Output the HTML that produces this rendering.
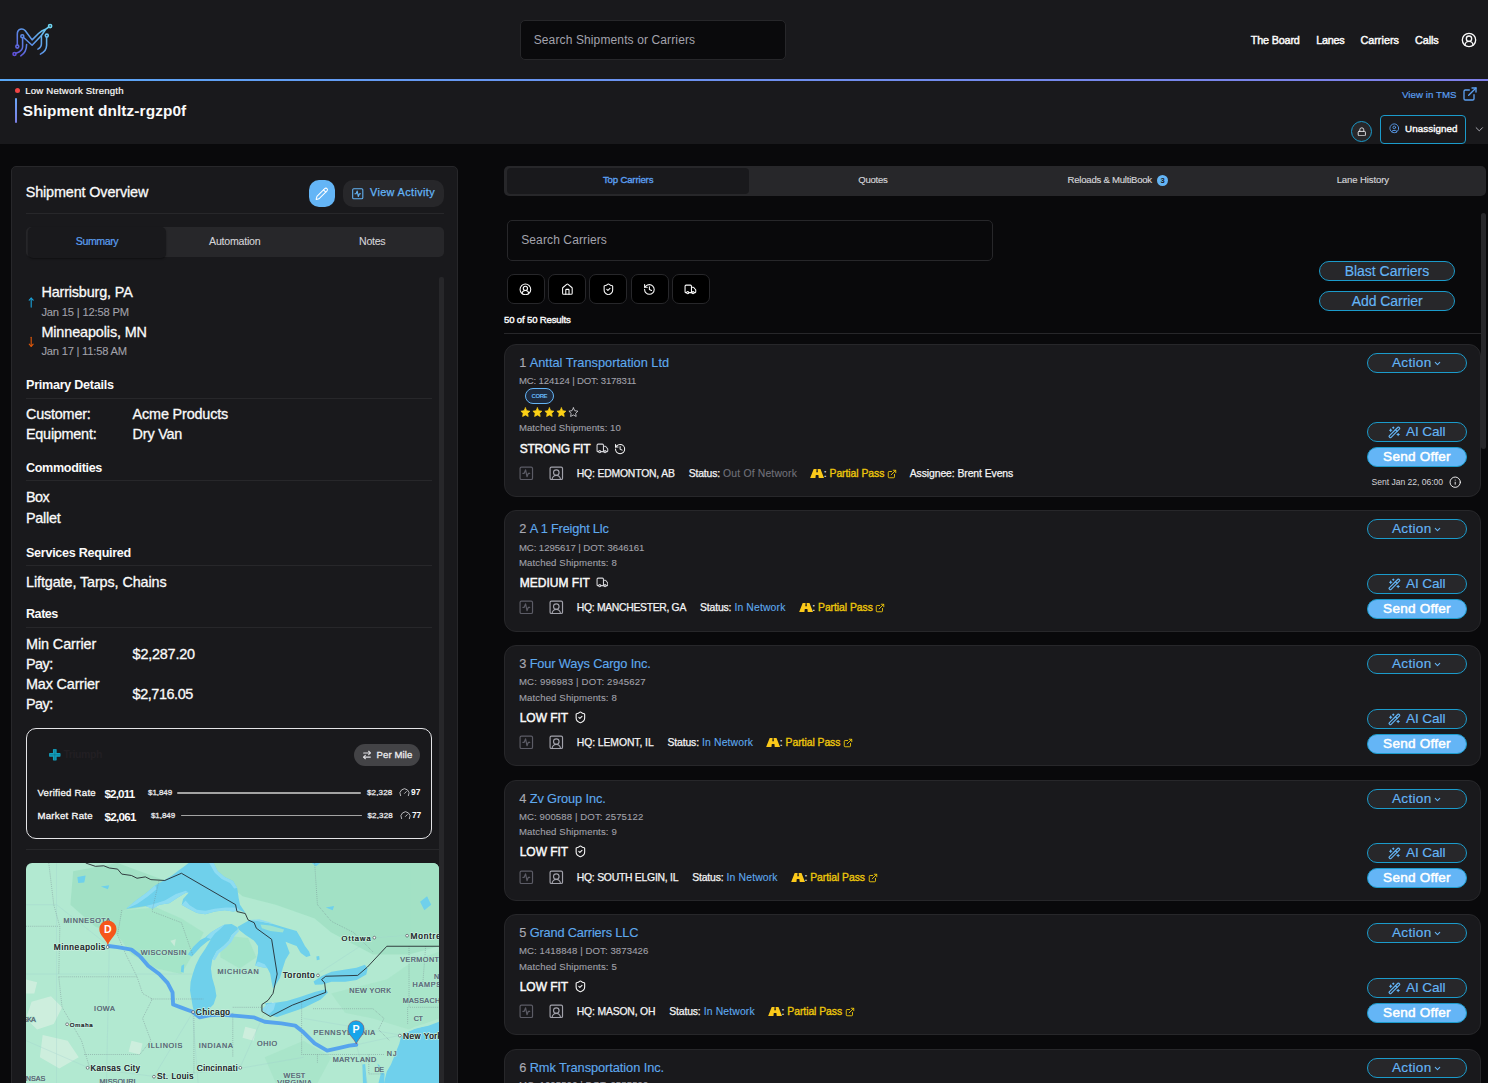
<!DOCTYPE html>
<html lang="en">
<head>
<meta charset="utf-8">
<title>Shipment dnltz-rgzp0f</title>
<style>
*{box-sizing:border-box}
html,body{margin:0;padding:0}
body{position:relative;width:1488px;height:1083px;overflow:hidden;background:#09090b;color:#fafafa;font-family:"Liberation Sans",sans-serif;font-size:12px}
header,nav,aside,main,section,article,div.b,button.b,a.b,ul.b,li.b{position:absolute;display:block;margin:0;padding:0;overflow:visible}
button{font:inherit;color:inherit;background:none;border:0;padding:0;margin:0}
.t{position:absolute;white-space:nowrap;margin:0;font-weight:400;display:block}
.a{position:absolute;display:block}
a{text-decoration:none;color:inherit}
</style>
</head>
<body>
<header style="left:0px;top:0px;width:1488px;height:79px;background:#19191c;"><svg class="a" style="left:0;top:0" width="64" height="79" viewBox="0 0 64 79" fill="none" stroke="url(#lg)" stroke-width="1.55" stroke-linecap="round" stroke-linejoin="round"><defs><linearGradient id="lg" gradientUnits="userSpaceOnUse" x1="14" y1="56" x2="50" y2="26"><stop offset="0" stop-color="#5f4bd6"/><stop offset="0.45" stop-color="#5b8fe8"/><stop offset="1" stop-color="#6fd6f2"/></linearGradient></defs><path d="M17.3 45V34.2c0-5.6 5.2-6.2 7.8-3.700L32.100 39.900 38.500 33.500C41.500 30.800 43.500 30 45.500 29.300L48.800 27"/><path d="M23.300 37.200 32.100 45.200 41.400 35.500 45.200 30"/><path d="M22.600 38v9c0 3.500-3 5-6.700 6.300"/><path d="M26.600 44.400c0 5-2 9-5.800 11.500"/><path d="M41.400 35.700v8c0 2.500-1.200 4.200-3.500 5.400"/><path d="M46.600 37.300v8c0 4-2.500 7-6.200 8.800"/><circle cx="17.300" cy="46.600" r="1.500"/><circle cx="22.300" cy="36.200" r="1.500"/><circle cx="14.500" cy="54" r="1.500"/><circle cx="50.100" cy="26" r="1.600"/><circle cx="46.800" cy="35.600" r="1.500"/></svg><div class="b" style="left:519.5px;top:20px;width:266.5px;height:40px;background:#0a0a0c;border:1px solid #27272a;border-radius:5px;"><span class="t" style="left:13.2px;top:13px;font-size:12px;line-height:12px;color:#a3a3ad;letter-spacing:0.123px;">Search Shipments or Carriers</span></div>
<nav style="left:1240px;top:20px;width:248px;height:40px;"><a class="t" style="left:10.8px;top:15px;font-size:10.8px;line-height:10.8px;color:#fafafa;-webkit-text-stroke:0.45px #fafafa;letter-spacing:-0.169px;">The Board</a><a class="t" style="left:76.2px;top:15px;font-size:10.8px;line-height:10.8px;color:#fafafa;-webkit-text-stroke:0.45px #fafafa;letter-spacing:-0.244px;">Lanes</a><a class="t" style="left:120.4px;top:15px;font-size:10.8px;line-height:10.8px;color:#fafafa;-webkit-text-stroke:0.45px #fafafa;letter-spacing:0.026px;">Carriers</a><a class="t" style="left:175px;top:15px;font-size:10.8px;line-height:10.8px;color:#fafafa;-webkit-text-stroke:0.45px #fafafa;letter-spacing:-0.080px;">Calls</a><svg class="a" style="left:221px;top:12px;" width="16" height="16" viewBox="0 0 24 24" fill="none" stroke="#fafafa" stroke-width="2" stroke-linecap="round" stroke-linejoin="round"><path d="M18 20a6 6 0 0 0-12 0"/><circle cx="12" cy="10" r="4"/><circle cx="12" cy="12" r="10"/></svg></nav>
</header>
<div class="b" style="left:0px;top:79px;width:1488px;height:2px;background:linear-gradient(90deg,#5aa8f6 0%,#6a93f0 40%,#7f7fe8 100%);"></div>
<section style="left:0px;top:81px;width:1488px;height:63px;background:#19191c;"><span class="a" style="left:14.5px;top:7px;width:5px;height:5px;background:#ef4444;border-radius:50%;"></span><span class="t" style="left:25.2px;top:5px;font-size:9.6px;line-height:9.6px;color:#fafafa;-webkit-text-stroke:0.2px #fafafa;letter-spacing:0.205px;">Low Network Strength</span><span class="a" style="left:14.8px;top:17px;width:2.6px;height:24.5px;background:linear-gradient(180deg,#6aa6f5,#7b7fe6);border-radius:1px;"></span><h1 class="t" style="left:22.8px;top:22px;font-size:15.4px;line-height:15.4px;color:#fafafa;font-weight:700;letter-spacing:0.091px;">Shipment dnltz-rgzp0f</h1><a class="t" style="left:1402px;top:9px;font-size:9.7px;line-height:9.7px;color:#5b9ff0;-webkit-text-stroke:0.2px #5b9ff0;letter-spacing:0.052px;">View in TMS</a><svg class="a" style="left:1462px;top:4.6px;" width="16" height="16" viewBox="0 0 24 24" fill="none" stroke="#5b9ff0" stroke-width="2" stroke-linecap="round" stroke-linejoin="round"><path d="M15 3h6v6"/><path d="M10 14 21 3"/><path d="M18 13v6a2 2 0 0 1-2 2H5a2 2 0 0 1-2-2V8a2 2 0 0 1 2-2h6"/></svg><button class="b" style="left:1351px;top:40px;width:21px;height:21px;background:#27272a;border:1px solid #1b9bcb;border-radius:50%;"><svg class="a" style="left:4.8px;top:4.5px;" width="9.6" height="9.6" viewBox="0 0 24 24" fill="none" stroke="#e4e4e7" stroke-width="2.4" stroke-linecap="round" stroke-linejoin="round"><rect width="18" height="11" x="3" y="11" rx="2" ry="2"/><path d="M7 11V7a5 5 0 0 1 10 0v4"/></svg></button>
<button class="b" style="left:1380px;top:34px;width:86px;height:28.6px;border:1.5px solid #1b9bcb;border-radius:4px;background:#19191c;"><svg class="a" style="left:7.5px;top:7.3px;" width="10.6" height="10.6" viewBox="0 0 24 24" fill="none" stroke="#5b9ff0" stroke-width="2" stroke-linecap="round" stroke-linejoin="round"><circle cx="12" cy="12" r="10"/><circle cx="12" cy="10" r="3"/><path d="M7 20.662V19a2 2 0 0 1 2-2h6a2 2 0 0 1 2 2v1.662"/></svg><span class="t" style="left:24px;top:7.5px;font-size:9.8px;line-height:9.8px;color:#fafafa;-webkit-text-stroke:0.4px #fafafa;letter-spacing:0.085px;">Unassigned</span></button>
<svg class="a" style="left:1473.4px;top:42.4px;" width="12.6" height="12.6" viewBox="0 0 24 24" fill="none" stroke="#b4b4bc" stroke-width="1.8" stroke-linecap="round" stroke-linejoin="round"><path d="m6 9 6 6 6-6"/></svg></section>
<aside style="left:11px;top:166px;width:446.6px;height:960px;background:#19191c;border:1px solid #27272a;border-radius:5px;"><h2 class="t" style="left:13.7px;top:18px;font-size:14.4px;line-height:14.4px;color:#fafafa;-webkit-text-stroke:0.3px #fafafa;letter-spacing:-0.134px;">Shipment Overview</h2><button class="b" style="left:297px;top:13px;width:26.4px;height:27px;background:#64b5f6;border-radius:10px;"><svg class="a" style="left:6px;top:7px;" width="13.6" height="13.6" viewBox="0 0 24 24" fill="none" stroke="#ffffff" stroke-width="1.8" stroke-linecap="round" stroke-linejoin="round"><path d="M21.174 6.812a1 1 0 0 0-3.986-3.987L3.842 16.174a2 2 0 0 0-.5.830l-1.321 4.352a.5.5 0 0 0 .623.622l4.353-1.320a2 2 0 0 0 .830-.497z"/><path d="m15 5 4 4"/></svg></button>
<button class="b" style="left:331px;top:13px;width:101px;height:27px;background:#27272a;border-radius:10px;"><svg class="a" style="left:7.8px;top:6.8px;" width="13.5" height="13.5" viewBox="0 0 24 24" fill="none" stroke="#64b5f6" stroke-width="1.9" stroke-linecap="round" stroke-linejoin="round"><rect width="18" height="18" x="3" y="3" rx="2"/><path d="M17 12h-2l-2 5-2-10-2 5H7"/></svg><span class="t" style="left:27px;top:7px;font-size:10.8px;line-height:10.8px;color:#64b5f6;-webkit-text-stroke:0.25px #64b5f6;letter-spacing:0.399px;">View Activity</span></button>
<span class="a" style="left:14px;top:46px;width:418px;height:1px;background:#27272a;"></span><nav style="left:14px;top:60px;width:418px;height:30px;background:#27272a;border-radius:5px;"><span class="a" style="left:1.5px;top:0px;width:138px;height:30.5px;background:#19191c;border-radius:5px;box-shadow:0 1px 2px rgba(0,0,0,.4);"></span><a class="t" style="left:49.75px;top:9px;font-size:10.6px;line-height:10.6px;color:#5b9ff0;-webkit-text-stroke:0.2px #5b9ff0;letter-spacing:-0.404px;">Summary</a><a class="t" style="left:183.05px;top:9px;font-size:10.6px;line-height:10.6px;color:#d4d4d8;-webkit-text-stroke:0.1px #d4d4d8;letter-spacing:-0.229px;">Automation</a><a class="t" style="left:333px;top:9px;font-size:10.6px;line-height:10.6px;color:#d4d4d8;-webkit-text-stroke:0.1px #d4d4d8;letter-spacing:-0.258px;">Notes</a></nav>
<span class="a" style="left:427.3px;top:110px;width:4.7px;height:810px;background:#27272a;border-radius:2px 2px 0 0;"></span><section style="left:14px;top:110px;width:413px;height:810px;"><svg class="a" style="left:-1.2px;top:19px;" width="12.4" height="12.4" viewBox="0 0 24 24" fill="none" stroke="#1a9fd6" stroke-width="2.2" stroke-linecap="round" stroke-linejoin="round"><path d="m8.200 8.200 3.800-4.200 3.800 4.200"/><path d="M12 21.500V4"/></svg><span class="t" style="left:15.4px;top:8px;font-size:14.4px;line-height:14.4px;color:#fafafa;-webkit-text-stroke:0.3px #fafafa;letter-spacing:-0.151px;">Harrisburg, PA</span><span class="t" style="left:15.4px;top:30px;font-size:11.2px;line-height:11.2px;color:#a1a1aa;-webkit-text-stroke:0.1px #a1a1aa;letter-spacing:-0.177px;">Jan 15 | 12:58 PM</span><svg class="a" style="left:-1.2px;top:59px;" width="12.4" height="12.4" viewBox="0 0 24 24" fill="none" stroke="#d9560b" stroke-width="2.2" stroke-linecap="round" stroke-linejoin="round"><path d="m8.200 15.800 3.800 4.200 3.800-4.200"/><path d="M12 2.500V20"/></svg><span class="t" style="left:15.4px;top:48px;font-size:14.4px;line-height:14.4px;color:#fafafa;-webkit-text-stroke:0.3px #fafafa;letter-spacing:-0.111px;">Minneapolis, MN</span><span class="t" style="left:15.4px;top:69px;font-size:11.2px;line-height:11.2px;color:#a1a1aa;-webkit-text-stroke:0.1px #a1a1aa;letter-spacing:-0.221px;">Jan 17 | 11:58 AM</span><h3 class="t" style="left:0px;top:102px;font-size:12.6px;line-height:12.6px;color:#fafafa;font-weight:700;letter-spacing:-0.268px;">Primary Details</h3><span class="a" style="left:0px;top:121px;width:406px;height:1px;background:#27272a;"></span><span class="t" style="left:0px;top:130px;font-size:14.4px;line-height:14.4px;color:#fafafa;-webkit-text-stroke:0.3px #fafafa;letter-spacing:-0.197px;">Customer:</span><span class="t" style="left:106.6px;top:130px;font-size:14.4px;line-height:14.4px;color:#fafafa;-webkit-text-stroke:0.3px #fafafa;letter-spacing:-0.160px;">Acme Products</span><span class="t" style="left:0px;top:150px;font-size:14.4px;line-height:14.4px;color:#fafafa;-webkit-text-stroke:0.3px #fafafa;letter-spacing:-0.240px;">Equipment:</span><span class="t" style="left:106.6px;top:150px;font-size:14.4px;line-height:14.4px;color:#fafafa;-webkit-text-stroke:0.3px #fafafa;letter-spacing:-0.189px;">Dry Van</span><h3 class="t" style="left:0px;top:185px;font-size:12.6px;line-height:12.6px;color:#fafafa;font-weight:700;letter-spacing:-0.344px;">Commodities</h3><span class="a" style="left:0px;top:203.3px;width:406px;height:1px;background:#27272a;"></span><span class="t" style="left:0px;top:213px;font-size:14.4px;line-height:14.4px;color:#fafafa;-webkit-text-stroke:0.3px #fafafa;letter-spacing:-0.604px;">Box</span><span class="t" style="left:0px;top:234px;font-size:14.4px;line-height:14.4px;color:#fafafa;-webkit-text-stroke:0.3px #fafafa;letter-spacing:-0.267px;">Pallet</span><h3 class="t" style="left:0px;top:270px;font-size:12.6px;line-height:12.6px;color:#fafafa;font-weight:700;letter-spacing:-0.289px;">Services Required</h3><span class="a" style="left:0px;top:288.3px;width:406px;height:1px;background:#27272a;"></span><span class="t" style="left:0px;top:298px;font-size:14.4px;line-height:14.4px;color:#fafafa;-webkit-text-stroke:0.3px #fafafa;letter-spacing:-0.101px;">Liftgate, Tarps, Chains</span><h3 class="t" style="left:0px;top:331px;font-size:12.6px;line-height:12.6px;color:#fafafa;font-weight:700;letter-spacing:-0.483px;">Rates</h3><span class="a" style="left:0px;top:350px;width:406px;height:1px;background:#27272a;"></span><span class="t" style="left:0px;top:360px;font-size:14.4px;line-height:14.4px;color:#fafafa;-webkit-text-stroke:0.3px #fafafa;letter-spacing:-0.088px;">Min Carrier</span><span class="t" style="left:0px;top:380px;font-size:14.4px;line-height:14.4px;color:#fafafa;-webkit-text-stroke:0.3px #fafafa;letter-spacing:-0.524px;">Pay:</span><span class="t" style="left:106.6px;top:370px;font-size:14.4px;line-height:14.4px;color:#fafafa;-webkit-text-stroke:0.3px #fafafa;letter-spacing:-0.203px;">$2,287.20</span><span class="t" style="left:0px;top:400px;font-size:14.4px;line-height:14.4px;color:#fafafa;-webkit-text-stroke:0.3px #fafafa;letter-spacing:-0.152px;">Max Carrier</span><span class="t" style="left:0px;top:420px;font-size:14.4px;line-height:14.4px;color:#fafafa;-webkit-text-stroke:0.3px #fafafa;letter-spacing:-0.524px;">Pay:</span><span class="t" style="left:106.6px;top:410px;font-size:14.4px;line-height:14.4px;color:#fafafa;-webkit-text-stroke:0.3px #fafafa;letter-spacing:-0.426px;">$2,716.05</span><div class="b" style="left:0px;top:451px;width:406.2px;height:111px;border:1px solid #e4e4e7;border-radius:10px;"><svg class="a" style="left:22.1px;top:20.1px" width="11.6" height="11.6" viewBox="0 0 10 10"><path fill="#14a0be" d="M3.400 .300Q5 -.300 6.600 .300V3.400H9.700Q10.300 5 9.700 6.600H6.600V9.700Q5 10.300 3.400 9.700V6.600H.300Q-.300 5 .300 3.400H3.400z"/><path d="M5 .500V9.500M.500 5H9.500" stroke="#0d6d83" stroke-width=".5" fill="none"/></svg><span class="t" style="left:36.4px;top:20px;font-size:10.5px;line-height:10.5px;color:#221f23;font-weight:700;letter-spacing:-0.417px;">Triumph</span><button class="b" style="left:327px;top:15px;width:66px;height:22px;background:#434346;border-radius:11px;"><svg class="a" style="left:8.4px;top:6.2px;" width="10" height="10" viewBox="0 0 24 24" fill="none" stroke="#e4e4e7" stroke-width="2.6" stroke-linecap="round" stroke-linejoin="round"><path d="m16 3 4 4-4 4"/><path d="M20 7H4"/><path d="m8 21-4-4 4-4"/><path d="M4 17h16"/></svg><span class="t" style="left:22.5px;top:6px;font-size:9.6px;line-height:9.6px;color:#ececef;-webkit-text-stroke:0.3px #ececef;letter-spacing:0.077px;">Per Mile</span></button>
<span class="t" style="left:10.4px;top:59px;font-size:9.6px;line-height:9.6px;color:#fafafa;-webkit-text-stroke:0.3px #fafafa;letter-spacing:0.282px;">Verified Rate</span><span class="t" style="left:77.4px;top:59px;font-size:11.6px;line-height:11.6px;color:#fafafa;font-weight:700;letter-spacing:-0.821px;">$2,011</span><span class="t" style="left:121.1px;top:60px;font-size:8px;line-height:8px;color:#e4e4e7;-webkit-text-stroke:0.3px #e4e4e7;letter-spacing:-0.078px;">$1,849</span><span class="a" style="left:150.2px;top:62.7px;width:183.5px;height:2px;background:#a3a3a3;border-radius:1px;"></span><span class="t" style="left:339.9px;top:60px;font-size:8px;line-height:8px;color:#e4e4e7;-webkit-text-stroke:0.3px #e4e4e7;letter-spacing:0.189px;">$2,328</span><svg class="a" style="left:371.6px;top:58px;" width="11" height="11" viewBox="0 0 24 24" fill="none" stroke="#e4e4e7" stroke-width="1.7" stroke-linecap="round" stroke-linejoin="round"><path d="m12 14 4-4"/><path d="M3.340 19a10 10 0 1 1 17.320 0"/></svg><span class="t" style="left:384px;top:59px;font-size:8.4px;line-height:8.4px;color:#fafafa;font-weight:700;letter-spacing:0.186px;">97</span><span class="t" style="left:10.4px;top:82px;font-size:9.6px;line-height:9.6px;color:#fafafa;-webkit-text-stroke:0.3px #fafafa;letter-spacing:0.294px;">Market Rate</span><span class="t" style="left:77.4px;top:82px;font-size:11.6px;line-height:11.6px;color:#fafafa;font-weight:700;letter-spacing:-0.678px;">$2,061</span><span class="t" style="left:124px;top:83px;font-size:8px;line-height:8px;color:#e4e4e7;-webkit-text-stroke:0.3px #e4e4e7;letter-spacing:-0.078px;">$1,849</span><span class="a" style="left:153.5px;top:85.9px;width:181.4px;height:1px;background:#a3a3a3;border-radius:1px;"></span><span class="t" style="left:340.4px;top:83px;font-size:8px;line-height:8px;color:#e4e4e7;-webkit-text-stroke:0.3px #e4e4e7;letter-spacing:0.189px;">$2,328</span><svg class="a" style="left:372.6px;top:81px;" width="11" height="11" viewBox="0 0 24 24" fill="none" stroke="#e4e4e7" stroke-width="1.7" stroke-linecap="round" stroke-linejoin="round"><path d="m12 14 4-4"/><path d="M3.340 19a10 10 0 1 1 17.320 0"/></svg><span class="t" style="left:385px;top:82px;font-size:8.4px;line-height:8.4px;color:#fafafa;font-weight:700;letter-spacing:-0.164px;">77</span></div>
<span class="a" style="left:0px;top:572px;width:413px;height:1px;background:#27272a;"></span><div class="b" style="left:0px;top:586px;width:413px;height:240px;background:#b2e9d1;border-radius:6px 6px 0 0;overflow:hidden;"><svg class="a" style="left:0;top:0" width="413" height="220.1" viewBox="0 0 1488 793" font-family="Liberation Sans, sans-serif"><path fill="#a3e2c5" d="M150 0H1488V300L1380 330 1250 330 1100 250 1040 200 900 150 780 120 640 0z"/><path fill="#a3e2c5" d="M170 30 330 0 520 70 470 150 350 170 330 260 250 230 160 150z"/><path fill="#a3e2c5" d="M350 170 470 160 560 200 640 250 600 330 560 400 470 380 380 330 330 260z" opacity=".7"/><path fill="#a3e2c5" d="M1100 470 1300 420 1400 350 1488 320V560L1380 600 1250 560 1150 540z" opacity=".6"/><path fill="#a3e2c5" d="M700 260 800 270 830 340 770 380 700 340z" opacity=".7"/><path fill="#a3e2c5" d="M860 700 1000 640 1100 700 1050 793H900z" opacity=".6"/><g fill="#e9f4ea" opacity=".5"><path d="M0 420 40 430 30 470 0 470z"/><path d="M20 500 90 480 130 520 100 580 40 600 0 560z"/><path d="M60 620 150 640 190 700 120 740 50 700z"/><path d="M380 640 420 650 410 690 370 680z"/><path d="M520 280 540 275 535 300z"/><path d="M790 590 830 600 820 640 780 630z"/><path d="M870 505 890 500 895 520 872 525z"/></g><path fill="#6fd0ec" d="M361 165 396 135 431 110 466 80 501 60 526 45 546 30 566 15 586 0H676L691 30 716 50 746 65 761 90 766 125 771 150 791 180 771 170 746 175 716 170 681 175 646 185 616 180 586 165 561 150 566 130 586 107 576 107 546 125 516 145 481 150 456 165 431 155 396 160z"/><path fill="#8fdcf2" d="M361 165 396 135 431 110 466 80 470 95 440 120 400 148z"/><path fill="#8fdcf2" d="M546 125 516 145 481 150 456 165 431 155 460 148 500 135 540 112 576 100 586 107 576 107z"/><path fill="#8fdcf2" d="M561 150 586 165 616 180 646 185 681 175 716 170 746 175 771 170 760 160 720 160 680 165 646 172 616 168 590 152 575 135z"/><path fill="#8fdcf2" d="M676 0 691 30 716 50 746 65 761 90 750 92 735 72 705 58 680 35 660 0z"/><path fill="#6fd0ec" d="M763 232 741 220 716 222 691 235 666 250 646 268 628 277 603 302 583 330 598 337 629 303 653 283 666 276 646 309 626 339 611 369 601 399 593 429 591 459 596 489 601 519 606 536 628 546 651 534 676 509 686 479 681 449 671 414 666 379 671 349 686 319 711 299 731 279 741 259 763 240z"/><path fill="#8fdcf2" d="M666 274 680 255 700 238 716 222 691 235 666 250 650 268z"/><path fill="#8fdcf2" d="M763 240 741 259 731 279 711 299 686 319 671 349 680 350 695 325 720 305 740 285 752 262 768 245z"/><path fill="#6fd0ec" d="M763 230 806 205 841 210 890 220 940 235 975 245 990 270 1005 299 1020 319 1025 334 1010 339 990 324 975 299 960 294 935 284 950 324 935 349 925 379 915 414 900 439 890 452 885 429 880 399 870 379 841 374 826 369 831 349 836 324 836 299 821 279 791 259 766 240z"/><path fill="#9fe3d0" d="M845 222 880 225 930 240 925 250 880 245 850 235z"/><path fill="#8fdcf2" d="M826 369 841 374 870 379 860 365 835 355z"/><path fill="#8fdcf2" d="M806 205 841 210 890 220 880 214 840 203z"/><path fill="#6fd0ec" d="M862 505 888 503 890 522 868 524z"/><path fill="#6fd0ec" d="M850 528 870 508 940 497 990 482 1040 465 1080 455 1088 467 1062 492 1000 522 950 540 905 555 872 548z"/><path fill="#8fdcf2" d="M850 528 870 508 900 503 892 530 872 548z"/><path fill="#6fd0ec" d="M1036 427 1066 407 1101 392 1151 384 1191 377 1221 367 1231 380 1226 402 1191 422 1151 428 1101 428 1066 438 1041 439z"/><path fill="#6fd0ec" d="M1046 337 1056 335 1058 348 1048 350z"/><g fill="#6fd0ec"><path d="M185 50 215 45 210 70 188 72z"/><path d="M270 85 300 80 295 95z"/><path d="M1080 160 1110 155 1105 170z"/><path d="M1420 140 1445 120 1460 150 1435 170z"/><path d="M1030 0 1060 0 1045 12z"/><path d="M560 370 570 365 568 395 558 392z"/><path d="M1212 726 1222 724 1228 793H1214z"/><path d="M1266 722 1280 735 1292 760 1290 793H1270L1278 760z"/></g><path fill="#6fd0ec" d="M1491 571 1450 586 1400 596 1365 611 1350 631 1345 651 1335 676 1325 701 1315 726 1300 751 1295 771 1290 793H1491z"/><path fill="#b2e9d1" d="M1365 608 1400 590 1450 576 1491 560V566L1450 584 1400 598 1370 612z"/><g fill="none" stroke="#9fcfcf" stroke-width="2" opacity=".55"><path d="M0 150H110L300 300"/><path d="M0 400H600"/><path d="M110 0V793"/><path d="M300 300 290 793"/><path d="M0 640 230 740 470 770 770 740 1000 700"/><path d="M600 540 620 793"/><path d="M770 740 850 560 880 500"/><path d="M600 540 460 770"/><path d="M1050 400 1250 270 1380 260"/><path d="M1190 655 1350 620"/><path d="M1190 655 1230 793"/><path d="M1000 560 1350 620"/></g><g fill="none" stroke="#6f7f89" stroke-width="1.9" stroke-dasharray="3 4" opacity=".9"><path d="M0 228H120"/><path d="M82 0 100 150 122 230 118 400"/><path d="M118 410H400"/><path d="M345 170 330 260 360 330 400 410 420 470 455 490"/><path d="M450 490H640"/><path d="M455 170 480 60"/><path d="M455 175 560 215 600 330"/><path d="M118 410 130 520 200 640 230 740"/><path d="M210 690H410L450 640 420 560 455 490"/><path d="M605 545V760"/><path d="M745 540V700"/><path d="M745 520H850"/><path d="M993 500V690H1290"/><path d="M1035 525H1250L1290 560 1270 600 1310 640"/><path d="M1050 690V720"/><path d="M1235 690V760H1290"/><path d="M1380 300V520H1488"/><path d="M1375 520V580"/><path d="M1440 300 1430 430"/><path d="M1040 0 1050 150 1100 210 1180 250 1250 320"/></g><path fill="none" stroke="#23292e" stroke-width="3.2" stroke-linejoin="round" d="M215 0 250 12 280 10 300 18 330 22 345 40 380 45 400 55 430 50 450 60 500 63 560 37 755 150 760 175 790 182 800 205 822 215 830 235 885 275 905 400 890 470 872 495 850 510 850 535 880 553 960 512 1080 466 1076 432 1065 420 1080 408 1195 405 1230 375 1300 300H1488"/><path fill="none" stroke="#56a4ed" stroke-width="14" stroke-linecap="round" stroke-linejoin="round" d="M297 299 330 303 380 312 410 335 440 370 480 400 510 432 528 466 530 510 560 521 600 536 625 556 660 549 700 546 760 551 820 556 860 572 920 578 970 586 1000 610 1040 650 1085 676 1130 666 1165 658 1190 655"/><g stroke-linejoin="round"><text x="135" y="216" font-size="26" fill="#5f6d7b" stroke="#b2e9d1" stroke-width="5" style="paint-order:stroke" textLength="170" lengthAdjust="spacing">MINNESOTA</text><text x="135" y="216" font-size="26" fill="#5f6d7b" stroke="#5f6d7b" stroke-width=".3" textLength="170" lengthAdjust="spacing">MINNESOTA</text><text x="413" y="333" font-size="26" fill="#5f6d7b" stroke="#b2e9d1" stroke-width="5" style="paint-order:stroke" textLength="165" lengthAdjust="spacing">WISCONSIN</text><text x="413" y="333" font-size="26" fill="#5f6d7b" stroke="#5f6d7b" stroke-width=".3" textLength="165" lengthAdjust="spacing">WISCONSIN</text><text x="690" y="401" font-size="26" fill="#5f6d7b" stroke="#b2e9d1" stroke-width="5" style="paint-order:stroke" textLength="148" lengthAdjust="spacing">MICHIGAN</text><text x="690" y="401" font-size="26" fill="#5f6d7b" stroke="#5f6d7b" stroke-width=".3" textLength="148" lengthAdjust="spacing">MICHIGAN</text><text x="245" y="535" font-size="26" fill="#5f6d7b" stroke="#b2e9d1" stroke-width="5" style="paint-order:stroke" textLength="75" lengthAdjust="spacing">IOWA</text><text x="245" y="535" font-size="26" fill="#5f6d7b" stroke="#5f6d7b" stroke-width=".3" textLength="75" lengthAdjust="spacing">IOWA</text><text x="440" y="667" font-size="26" fill="#5f6d7b" stroke="#b2e9d1" stroke-width="5" style="paint-order:stroke" textLength="123" lengthAdjust="spacing">ILLINOIS</text><text x="440" y="667" font-size="26" fill="#5f6d7b" stroke="#5f6d7b" stroke-width=".3" textLength="123" lengthAdjust="spacing">ILLINOIS</text><text x="622" y="667" font-size="26" fill="#5f6d7b" stroke="#b2e9d1" stroke-width="5" style="paint-order:stroke" textLength="123" lengthAdjust="spacing">INDIANA</text><text x="622" y="667" font-size="26" fill="#5f6d7b" stroke="#5f6d7b" stroke-width=".3" textLength="123" lengthAdjust="spacing">INDIANA</text><text x="832" y="660" font-size="26" fill="#5f6d7b" stroke="#b2e9d1" stroke-width="5" style="paint-order:stroke" textLength="73" lengthAdjust="spacing">OHIO</text><text x="832" y="660" font-size="26" fill="#5f6d7b" stroke="#5f6d7b" stroke-width=".3" textLength="73" lengthAdjust="spacing">OHIO</text><text x="1348" y="357" font-size="26" fill="#5f6d7b" stroke="#b2e9d1" stroke-width="5" style="paint-order:stroke" textLength="140" lengthAdjust="spacing">VERMONT</text><text x="1348" y="357" font-size="26" fill="#5f6d7b" stroke="#5f6d7b" stroke-width=".3" textLength="140" lengthAdjust="spacing">VERMONT</text><text x="1470" y="419" font-size="26" fill="#5f6d7b" stroke="#b2e9d1" stroke-width="5" style="paint-order:stroke" textLength="60" lengthAdjust="spacing">NEW</text><text x="1470" y="419" font-size="26" fill="#5f6d7b" stroke="#5f6d7b" stroke-width=".3" textLength="60" lengthAdjust="spacing">NEW</text><text x="1393" y="446" font-size="26" fill="#5f6d7b" stroke="#b2e9d1" stroke-width="5" style="paint-order:stroke" textLength="175" lengthAdjust="spacing">HAMPSHIRE</text><text x="1393" y="446" font-size="26" fill="#5f6d7b" stroke="#5f6d7b" stroke-width=".3" textLength="175" lengthAdjust="spacing">HAMPSHIRE</text><text x="1165" y="470" font-size="26" fill="#5f6d7b" stroke="#b2e9d1" stroke-width="5" style="paint-order:stroke" textLength="150" lengthAdjust="spacing">NEW YORK</text><text x="1165" y="470" font-size="26" fill="#5f6d7b" stroke="#5f6d7b" stroke-width=".3" textLength="150" lengthAdjust="spacing">NEW YORK</text><text x="1357" y="504" font-size="26" fill="#5f6d7b" stroke="#b2e9d1" stroke-width="5" style="paint-order:stroke" textLength="245" lengthAdjust="spacing">MASSACHUSETTS</text><text x="1357" y="504" font-size="26" fill="#5f6d7b" stroke="#5f6d7b" stroke-width=".3" textLength="245" lengthAdjust="spacing">MASSACHUSETTS</text><text x="1397" y="568" font-size="26" fill="#5f6d7b" stroke="#b2e9d1" stroke-width="5" style="paint-order:stroke" textLength="33" lengthAdjust="spacing">CT</text><text x="1397" y="568" font-size="26" fill="#5f6d7b" stroke="#5f6d7b" stroke-width=".3" textLength="33" lengthAdjust="spacing">CT</text><text x="1036" y="621" font-size="26" fill="#5f6d7b" stroke="#b2e9d1" stroke-width="5" style="paint-order:stroke" textLength="222" lengthAdjust="spacing">PENNSYLVANIA</text><text x="1036" y="621" font-size="26" fill="#5f6d7b" stroke="#5f6d7b" stroke-width=".3" textLength="222" lengthAdjust="spacing">PENNSYLVANIA</text><text x="1300" y="697" font-size="26" fill="#5f6d7b" stroke="#b2e9d1" stroke-width="5" style="paint-order:stroke" textLength="35" lengthAdjust="spacing">NJ</text><text x="1300" y="697" font-size="26" fill="#5f6d7b" stroke="#5f6d7b" stroke-width=".3" textLength="35" lengthAdjust="spacing">NJ</text><text x="1105" y="716" font-size="26" fill="#5f6d7b" stroke="#b2e9d1" stroke-width="5" style="paint-order:stroke" textLength="157" lengthAdjust="spacing">MARYLAND</text><text x="1105" y="716" font-size="26" fill="#5f6d7b" stroke="#5f6d7b" stroke-width=".3" textLength="157" lengthAdjust="spacing">MARYLAND</text><text x="1256" y="752" font-size="26" fill="#5f6d7b" stroke="#b2e9d1" stroke-width="5" style="paint-order:stroke" textLength="34" lengthAdjust="spacing">DE</text><text x="1256" y="752" font-size="26" fill="#5f6d7b" stroke="#5f6d7b" stroke-width=".3" textLength="34" lengthAdjust="spacing">DE</text><text x="928" y="774" font-size="26" fill="#5f6d7b" stroke="#b2e9d1" stroke-width="5" style="paint-order:stroke" textLength="78" lengthAdjust="spacing">WEST</text><text x="928" y="774" font-size="26" fill="#5f6d7b" stroke="#5f6d7b" stroke-width=".3" textLength="78" lengthAdjust="spacing">WEST</text><text x="905" y="800" font-size="26" fill="#5f6d7b" stroke="#b2e9d1" stroke-width="5" style="paint-order:stroke" textLength="125" lengthAdjust="spacing">VIRGINIA</text><text x="905" y="800" font-size="26" fill="#5f6d7b" stroke="#5f6d7b" stroke-width=".3" textLength="125" lengthAdjust="spacing">VIRGINIA</text><text x="-25" y="573" font-size="26" fill="#5f6d7b" stroke="#b2e9d1" stroke-width="5" style="paint-order:stroke" textLength="60" lengthAdjust="spacing">ASKA</text><text x="-25" y="573" font-size="26" fill="#5f6d7b" stroke="#5f6d7b" stroke-width=".3" textLength="60" lengthAdjust="spacing">ASKA</text><text x="-36" y="786" font-size="26" fill="#5f6d7b" stroke="#b2e9d1" stroke-width="5" style="paint-order:stroke" textLength="106" lengthAdjust="spacing">KANSAS</text><text x="-36" y="786" font-size="26" fill="#5f6d7b" stroke="#5f6d7b" stroke-width=".3" textLength="106" lengthAdjust="spacing">KANSAS</text><text x="265" y="797" font-size="26" fill="#5f6d7b" stroke="#b2e9d1" stroke-width="5" style="paint-order:stroke" textLength="130" lengthAdjust="spacing">MISSOURI</text><text x="265" y="797" font-size="26" fill="#5f6d7b" stroke="#5f6d7b" stroke-width=".3" textLength="130" lengthAdjust="spacing">MISSOURI</text><circle cx="294" cy="303" r="5" fill="#fff" stroke="#3a4046" stroke-width="2.2"/><text x="100" y="313" font-size="30" fill="#2b2f33" stroke="#c9f0df" stroke-width="6" style="paint-order:stroke" textLength="185" lengthAdjust="spacing">Minneapolis</text><text x="100" y="313" font-size="30" fill="#2b2f33" stroke="#2b2f33" stroke-width=".35" textLength="185" lengthAdjust="spacing">Minneapolis</text><circle cx="602" cy="537" r="5" fill="#fff" stroke="#3a4046" stroke-width="2.2"/><text x="612" y="547" font-size="30" fill="#2b2f33" stroke="#c9f0df" stroke-width="6" style="paint-order:stroke" textLength="123" lengthAdjust="spacing">Chicago</text><text x="612" y="547" font-size="30" fill="#2b2f33" stroke="#2b2f33" stroke-width=".35" textLength="123" lengthAdjust="spacing">Chicago</text><circle cx="222" cy="738" r="5" fill="#fff" stroke="#3a4046" stroke-width="2.2"/><text x="232" y="748" font-size="30" fill="#2b2f33" stroke="#c9f0df" stroke-width="6" style="paint-order:stroke" textLength="178" lengthAdjust="spacing">Kansas City</text><text x="232" y="748" font-size="30" fill="#2b2f33" stroke="#2b2f33" stroke-width=".35" textLength="178" lengthAdjust="spacing">Kansas City</text><circle cx="461" cy="770" r="5" fill="#fff" stroke="#3a4046" stroke-width="2.2"/><text x="472" y="780" font-size="30" fill="#2b2f33" stroke="#c9f0df" stroke-width="6" style="paint-order:stroke" textLength="131" lengthAdjust="spacing">St. Louis</text><text x="472" y="780" font-size="30" fill="#2b2f33" stroke="#2b2f33" stroke-width=".35" textLength="131" lengthAdjust="spacing">St. Louis</text><circle cx="772" cy="738" r="5" fill="#fff" stroke="#3a4046" stroke-width="2.2"/><text x="615" y="748" font-size="30" fill="#2b2f33" stroke="#c9f0df" stroke-width="6" style="paint-order:stroke" textLength="147" lengthAdjust="spacing">Cincinnati</text><text x="615" y="748" font-size="30" fill="#2b2f33" stroke="#2b2f33" stroke-width=".35" textLength="147" lengthAdjust="spacing">Cincinnati</text><circle cx="1052" cy="405" r="5" fill="#fff" stroke="#3a4046" stroke-width="2.2"/><text x="925" y="415" font-size="30" fill="#2b2f33" stroke="#c9f0df" stroke-width="6" style="paint-order:stroke" textLength="115" lengthAdjust="spacing">Toronto</text><text x="925" y="415" font-size="30" fill="#2b2f33" stroke="#2b2f33" stroke-width=".35" textLength="115" lengthAdjust="spacing">Toronto</text><circle cx="1255" cy="269" r="5" fill="#fff" stroke="#3a4046" stroke-width="2.2"/><text x="1137" y="280" font-size="27" fill="#2b2f33" stroke="#c9f0df" stroke-width="6" style="paint-order:stroke" textLength="105" lengthAdjust="spacing">Ottawa</text><text x="1137" y="280" font-size="27" fill="#2b2f33" stroke="#2b2f33" stroke-width=".35" textLength="105" lengthAdjust="spacing">Ottawa</text><circle cx="1373" cy="262" r="5" fill="#fff" stroke="#3a4046" stroke-width="2.2"/><text x="1385" y="273" font-size="30" fill="#2b2f33" stroke="#c9f0df" stroke-width="6" style="paint-order:stroke" textLength="140" lengthAdjust="spacing">Montreal</text><text x="1385" y="273" font-size="30" fill="#2b2f33" stroke="#2b2f33" stroke-width=".35" textLength="140" lengthAdjust="spacing">Montreal</text><circle cx="1347" cy="622" r="5" fill="#fff" stroke="#3a4046" stroke-width="2.2"/><text x="1358" y="633" font-size="30" fill="#2b2f33" stroke="#c9f0df" stroke-width="6" style="paint-order:stroke" textLength="140" lengthAdjust="spacing">New York</text><text x="1358" y="633" font-size="30" fill="#2b2f33" stroke="#2b2f33" stroke-width=".35" textLength="140" lengthAdjust="spacing">New York</text><circle cx="148" cy="581" r="5" fill="#fff" stroke="#3a4046" stroke-width="2.2"/><text x="158" y="590" font-size="22" fill="#2b2f33" stroke="#c9f0df" stroke-width="6" style="paint-order:stroke" textLength="82" lengthAdjust="spacing">Omaha</text><text x="158" y="590" font-size="22" fill="#2b2f33" stroke="#2b2f33" stroke-width=".35" textLength="82" lengthAdjust="spacing">Omaha</text></g><path d="M295 296C285 270 264 262 264 238a31 31 0 0 1 62 0C326 262 305 270 295 296z" fill="#f5561b"/><text x="295" y="252" font-size="38" font-weight="700" fill="#fff" text-anchor="middle">D</text><path d="M1190 652C1180 628 1160 620 1160 597a29 29 0 0 1 58 0C1218 620 1200 628 1190 652z" fill="#16a5ea" stroke="#b03a3a" stroke-width="1.8"/><text x="1189" y="611" font-size="38" font-weight="700" fill="#fff" text-anchor="middle">P</text></svg></div>
</section>
</aside>
<main style="left:504px;top:166px;width:984px;height:917px;"><nav style="left:0px;top:0px;width:982px;height:30px;background:#27272a;border-radius:5px;"><span class="a" style="left:2.7px;top:1.6px;width:242.5px;height:26.6px;background:#19191c;border-radius:4px;"></span><a class="t" style="left:98.9px;top:9px;font-size:9.6px;line-height:9.6px;color:#5b9ff0;-webkit-text-stroke:0.35px #5b9ff0;letter-spacing:-0.154px;">Top Carriers</a><a class="t" style="left:354.25px;top:9px;font-size:9.6px;line-height:9.6px;color:#d4d4d8;-webkit-text-stroke:0.15px #d4d4d8;letter-spacing:-0.273px;">Quotes</a><a class="t" style="left:563.6px;top:9px;font-size:9.6px;line-height:9.6px;color:#d4d4d8;-webkit-text-stroke:0.15px #d4d4d8;letter-spacing:-0.251px;">Reloads &amp; MultiBook</a><span class="a" style="left:653.2px;top:9px;width:11px;height:11px;background:#64b5f6;border-radius:50%;"><span class="t" style="left:3.4px;top:2px;font-size:7.6px;line-height:7.6px;color:#18181b;font-weight:700;">3</span></span>
<a class="t" style="left:832.65px;top:9px;font-size:9.6px;line-height:9.6px;color:#d4d4d8;-webkit-text-stroke:0.15px #d4d4d8;letter-spacing:-0.130px;">Lane History</a></nav>
<div class="b" style="left:3px;top:54px;width:486px;height:40.5px;border:1px solid #27272a;border-radius:5px;background:#09090b;"><span class="t" style="left:13.2px;top:13px;font-size:12px;line-height:12px;color:#a3a3ad;letter-spacing:0.118px;">Search Carriers</span></div>
<button class="b" style="left:3px;top:108px;width:38px;height:30px;background:#000;border:1px solid #27272a;border-radius:7px;"><svg class="a" style="left:11.4px;top:7.6px;" width="12.8" height="12.8" viewBox="0 0 24 24" fill="none" stroke="#fafafa" stroke-width="2" stroke-linecap="round" stroke-linejoin="round"><path d="M18 20a6 6 0 0 0-12 0"/><circle cx="12" cy="10" r="4"/><circle cx="12" cy="12" r="10"/></svg></button>
<button class="b" style="left:44.2px;top:108px;width:38px;height:30px;background:#000;border:1px solid #27272a;border-radius:7px;"><svg class="a" style="left:11.4px;top:7.6px;" width="12.8" height="12.8" viewBox="0 0 24 24" fill="none" stroke="#fafafa" stroke-width="2" stroke-linecap="round" stroke-linejoin="round"><path d="M15 21v-8a1 1 0 0 0-1-1h-4a1 1 0 0 0-1 1v8"/><path d="M3 10a2 2 0 0 1 .709-1.528l7-5.999a2 2 0 0 1 2.582 0l7 5.999A2 2 0 0 1 21 10v9a2 2 0 0 1-2 2H5a2 2 0 0 1-2-2z"/></svg></button>
<button class="b" style="left:85.4px;top:108px;width:38px;height:30px;background:#000;border:1px solid #27272a;border-radius:7px;"><svg class="a" style="left:11.4px;top:7.6px;" width="12.8" height="12.8" viewBox="0 0 24 24" fill="none" stroke="#fafafa" stroke-width="2" stroke-linecap="round" stroke-linejoin="round"><path d="M20 13c0 5-3.500 7.500-7.660 8.950a1 1 0 0 1-.670-.010C7.500 20.500 4 18 4 13V6a1 1 0 0 1 1-1c2 0 4.500-1.200 6.240-2.720a1.170 1.170 0 0 1 1.520 0C14.510 3.810 17 5 19 5a1 1 0 0 1 1 1z"/><path d="m9 12 2 2 4-4"/></svg></button>
<button class="b" style="left:126.8px;top:108px;width:38px;height:30px;background:#000;border:1px solid #27272a;border-radius:7px;"><svg class="a" style="left:11.4px;top:7.6px;" width="12.8" height="12.8" viewBox="0 0 24 24" fill="none" stroke="#fafafa" stroke-width="2" stroke-linecap="round" stroke-linejoin="round"><path d="M3 12a9 9 0 1 0 9-9 9.750 9.750 0 0 0-6.740 2.740L3 8"/><path d="M3 3v5h5"/><path d="M12 7v5l4 2"/></svg></button>
<button class="b" style="left:167.8px;top:108px;width:38px;height:30px;background:#000;border:1px solid #27272a;border-radius:7px;"><svg class="a" style="left:11.4px;top:7.6px;" width="12.8" height="12.8" viewBox="0 0 24 24" fill="none" stroke="#fafafa" stroke-width="2" stroke-linecap="round" stroke-linejoin="round"><path d="M14 18V6a2 2 0 0 0-2-2H4a2 2 0 0 0-2 2v11a1 1 0 0 0 1 1h2"/><path d="M15 18H9"/><path d="M19 18h2a1 1 0 0 0 1-1v-3.650a1 1 0 0 0-.220-.624l-3.480-4.350A1 1 0 0 0 17.520 8H14"/><circle cx="17" cy="18" r="2"/><circle cx="7" cy="18" r="2"/></svg></button>
<span class="t" style="left:0px;top:149px;font-size:9.6px;line-height:9.6px;color:#fafafa;-webkit-text-stroke:0.4px #fafafa;letter-spacing:-0.171px;">50 of 50 Results</span><button class="b" style="left:815px;top:95px;width:136px;height:20.2px;background:#27272a;border:1px solid #1b9bcb;border-radius:10.1px;"><span class="t" style="left:24.7px;top:2px;font-size:14px;line-height:14px;color:#64b5f6;-webkit-text-stroke:0.15px #64b5f6;letter-spacing:-0.021px;">Blast Carriers</span></button>
<button class="b" style="left:815px;top:125px;width:136px;height:20.2px;background:#27272a;border:1px solid #1b9bcb;border-radius:10.1px;"><span class="t" style="left:31.7px;top:2px;font-size:14px;line-height:14px;color:#64b5f6;-webkit-text-stroke:0.15px #64b5f6;letter-spacing:-0.054px;">Add Carrier</span></button>
<span class="a" style="left:0px;top:167px;width:977px;height:1px;background:#27272a;"></span><span class="a" style="left:977.3px;top:47px;width:5px;height:235.6px;background:#27272a;border-radius:2.5px;"></span><article style="left:0px;top:178px;width:977px;height:152.8px;background:#19191c;border:1px solid #27272a;border-radius:12px;"><span class="t" style="left:14.2px;top:12px;font-size:12.8px;line-height:12.8px;color:#a9a9b2;-webkit-text-stroke:0.15px #a9a9b2;">1</span><a class="t" style="left:24.7px;top:12px;font-size:12.8px;line-height:12.8px;color:#5fa9ee;-webkit-text-stroke:0.12px #5fa9ee;">Anttal Transportation Ltd</a><span class="t" style="left:13.9px;top:31px;font-size:9.6px;line-height:9.6px;color:#a1a1aa;-webkit-text-stroke:0.1px #a1a1aa;letter-spacing:-0.154px;">MC: 124124 | DOT: 3178311</span><span class="a" style="left:19.8px;top:43px;width:29.5px;height:16px;border:1px solid #64b5f6;border-radius:8px;background:#1e2a3d;"><span class="t" style="left:5.8px;top:4px;font-size:6px;line-height:6px;color:#64b5f6;font-weight:700;letter-spacing:-0.436px;">CORE</span></span>
<svg class="a" style="left:14.8px;top:62.2px;" width="10.8" height="10.8" viewBox="0 0 24 24" fill="#fcd116" stroke="#fcd116" stroke-width="1.6" stroke-linecap="round" stroke-linejoin="round"><polygon points="12 2 15.09 8.26 22 9.27 17 14.14 18.18 21.02 12 17.77 5.82 21.02 7 14.14 2 9.27 8.91 8.26 12 2"/></svg><svg class="a" style="left:26.95px;top:62.2px;" width="10.8" height="10.8" viewBox="0 0 24 24" fill="#fcd116" stroke="#fcd116" stroke-width="1.6" stroke-linecap="round" stroke-linejoin="round"><polygon points="12 2 15.09 8.26 22 9.27 17 14.14 18.18 21.02 12 17.77 5.82 21.02 7 14.14 2 9.27 8.91 8.26 12 2"/></svg><svg class="a" style="left:39.1px;top:62.2px;" width="10.8" height="10.8" viewBox="0 0 24 24" fill="#fcd116" stroke="#fcd116" stroke-width="1.6" stroke-linecap="round" stroke-linejoin="round"><polygon points="12 2 15.09 8.26 22 9.27 17 14.14 18.18 21.02 12 17.77 5.82 21.02 7 14.14 2 9.27 8.91 8.26 12 2"/></svg><svg class="a" style="left:51.25px;top:62.2px;" width="10.8" height="10.8" viewBox="0 0 24 24" fill="#fcd116" stroke="#fcd116" stroke-width="1.6" stroke-linecap="round" stroke-linejoin="round"><polygon points="12 2 15.09 8.26 22 9.27 17 14.14 18.18 21.02 12 17.77 5.82 21.02 7 14.14 2 9.27 8.91 8.26 12 2"/></svg><svg class="a" style="left:63.4px;top:62.2px;" width="10.8" height="10.8" viewBox="0 0 24 24" fill="none" stroke="#e4e4e7" stroke-width="1.7" stroke-linecap="round" stroke-linejoin="round"><polygon points="12 2 15.09 8.26 22 9.27 17 14.14 18.18 21.02 12 17.77 5.82 21.02 7 14.14 2 9.27 8.91 8.26 12 2"/></svg><span class="t" style="left:13.9px;top:78px;font-size:9.6px;line-height:9.6px;color:#a1a1aa;-webkit-text-stroke:0.1px #a1a1aa;letter-spacing:0.057px;">Matched Shipments: 10</span><span class="t" style="left:14.7px;top:98px;font-size:12px;line-height:12px;color:#fafafa;-webkit-text-stroke:0.45px #fafafa;letter-spacing:-0.207px;">STRONG FIT</span><svg class="a" style="left:90.9px;top:97.4px;" width="12.8" height="12.8" viewBox="0 0 24 24" fill="none" stroke="#d4d4d8" stroke-width="2" stroke-linecap="round" stroke-linejoin="round"><path d="M14 18V6a2 2 0 0 0-2-2H4a2 2 0 0 0-2 2v11a1 1 0 0 0 1 1h2"/><path d="M15 18H9"/><path d="M19 18h2a1 1 0 0 0 1-1v-3.650a1 1 0 0 0-.220-.624l-3.480-4.350A1 1 0 0 0 17.520 8H14"/><circle cx="17" cy="18" r="2"/><circle cx="7" cy="18" r="2"/></svg><svg class="a" style="left:109.4px;top:97.7px;" width="12.2" height="12.2" viewBox="0 0 24 24" fill="none" stroke="#fafafa" stroke-width="2" stroke-linecap="round" stroke-linejoin="round"><path d="M3 12a9 9 0 1 0 9-9 9.750 9.750 0 0 0-6.740 2.740L3 8"/><path d="M3 3v5h5"/><path d="M12 7v5l4 2"/></svg><svg class="a" style="left:12.6px;top:119.5px;" width="16.6" height="16.6" viewBox="0 0 24 24" fill="none" stroke="#5c5c66" stroke-width="1.7" stroke-linecap="round" stroke-linejoin="round"><rect width="18" height="18" x="3" y="3" rx="2"/><path d="M17 12h-2l-2 5-2-10-2 5H7"/></svg><svg class="a" style="left:42.6px;top:119.5px;" width="16.6" height="16.6" viewBox="0 0 24 24" fill="none" stroke="#a1a1aa" stroke-width="1.7" stroke-linecap="round" stroke-linejoin="round"><path d="M18 21a6 6 0 0 0-12 0"/><circle cx="12" cy="11" r="4"/><rect width="18" height="18" x="3" y="3" rx="2"/></svg><span class="t" style="left:71.8px;top:124px;font-size:10.4px;line-height:10.4px;color:#f4f4f5;-webkit-text-stroke:0.25px #f4f4f5;letter-spacing:-0.184px;">HQ: EDMONTON, AB</span><span class="t" style="left:183.7px;top:124px;font-size:10.4px;line-height:10.4px;color:#f4f4f5;-webkit-text-stroke:0.25px #f4f4f5;letter-spacing:-0.151px;">Status:</span><span class="t" style="left:218.1px;top:124px;font-size:10.4px;line-height:10.4px;color:#71717a;-webkit-text-stroke:0.1px #71717a;letter-spacing:0.164px;">Out Of Network</span><svg class="a" style="left:305.3px;top:123.8px" width="14.2" height="9.4" viewBox="0 0 14.2 9.4" fill="#fbc91a"><path d="M3.700 0H6.600L6.300 3.200H7.900L7.600 0H10.500L14.200 9.400H8.800L8.400 6H5.800L5.400 9.400H0z"/></svg><span class="t" style="left:318.7px;top:124px;font-size:10.4px;line-height:10.4px;color:#e4e4e7;-webkit-text-stroke:0.2px #e4e4e7;">:</span><a class="t" style="left:324.5px;top:124px;font-size:10.4px;line-height:10.4px;color:#ecc60c;-webkit-text-stroke:0.35px #ecc60c;letter-spacing:-0.054px;">Partial Pass</a><svg class="a" style="left:381.9px;top:123.5px;" width="10" height="10" viewBox="0 0 24 24" fill="none" stroke="#ecc60c" stroke-width="2.2" stroke-linecap="round" stroke-linejoin="round"><path d="M15 3h6v6"/><path d="M10 14 21 3"/><path d="M18 13v6a2 2 0 0 1-2 2H5a2 2 0 0 1-2-2V8a2 2 0 0 1 2-2h6"/></svg><span class="t" style="left:404.7px;top:124px;font-size:10.4px;line-height:10.4px;color:#f4f4f5;-webkit-text-stroke:0.25px #f4f4f5;letter-spacing:-0.077px;">Assignee: Brent Evens</span><button class="b" style="left:862px;top:8px;width:100px;height:20px;background:#27272a;border:1px solid #1b9bcb;border-radius:10.0px;"><span class="t" style="left:24px;top:2px;font-size:13.6px;line-height:13.6px;color:#64b5f6;-webkit-text-stroke:0.15px #64b5f6;letter-spacing:0.303px;">Action</span><svg class="a" style="left:65px;top:4.6px;" width="9" height="9" viewBox="0 0 24 24" fill="none" stroke="#64b5f6" stroke-width="2.8" stroke-linecap="round" stroke-linejoin="round"><path d="m6 9 6 6 6-6"/></svg></button>
<button class="b" style="left:862px;top:77px;width:100px;height:20px;background:#27272a;border:1px solid #1b9bcb;border-radius:10.0px;"><span class="t" style="left:38px;top:2px;font-size:13.6px;line-height:13.6px;color:#64b5f6;-webkit-text-stroke:0.15px #64b5f6;letter-spacing:-0.107px;">AI Call</span><svg class="a" style="left:20.2px;top:2.8px;" width="12.8" height="12.8" viewBox="0 0 24 24" fill="none" stroke="#64b5f6" stroke-width="2.2" stroke-linecap="round" stroke-linejoin="round"><path d="m21.640 3.640-1.280-1.280a1.210 1.210 0 0 0-1.720 0L2.360 18.640a1.210 1.210 0 0 0 0 1.720l1.280 1.280a1.200 1.200 0 0 0 1.720 0L21.640 5.360a1.200 1.200 0 0 0 0-1.720"/><path d="m14 7 3 3"/><path d="M5 6v4"/><path d="M19 14v4"/><path d="M10 2v2"/><path d="M7 8H3"/><path d="M21 16h-4"/><path d="M11 3H9"/></svg></button>
<button class="b" style="left:862px;top:102px;width:100px;height:20px;background:#64b5f6;border:1px solid #1b9bcb;border-radius:10.0px;"><span class="t" style="left:15.1px;top:2px;font-size:13.6px;line-height:13.6px;color:#ffffff;-webkit-text-stroke:0.5px #ffffff;letter-spacing:0.220px;">Send Offer</span></button>
<span class="t" style="left:866.5px;top:133px;font-size:8.6px;line-height:8.6px;color:#d4d4d8;letter-spacing:-0.036px;">Sent Jan 22, 06:00</span><svg class="a" style="left:943.9px;top:131.2px;" width="12.4" height="12.4" viewBox="0 0 24 24" fill="none" stroke="#fafafa" stroke-width="1.8" stroke-linecap="round" stroke-linejoin="round"><circle cx="12" cy="12" r="10"/><path d="M12 16v-4"/><path d="M12 8h.01"/></svg></article>
<article style="left:0px;top:344px;width:977px;height:122px;background:#19191c;border:1px solid #27272a;border-radius:12px;"><span class="t" style="left:14.2px;top:12px;font-size:12.8px;line-height:12.8px;color:#a9a9b2;-webkit-text-stroke:0.15px #a9a9b2;">2</span><a class="t" style="left:24.7px;top:12px;font-size:12.8px;line-height:12.8px;color:#5fa9ee;-webkit-text-stroke:0.12px #5fa9ee;letter-spacing:-0.188px;">A 1 Freight Llc</a><span class="t" style="left:13.9px;top:32px;font-size:9.6px;line-height:9.6px;color:#a1a1aa;-webkit-text-stroke:0.1px #a1a1aa;letter-spacing:-0.069px;">MC: 1295617 | DOT: 3646161</span><span class="t" style="left:13.9px;top:47px;font-size:9.6px;line-height:9.6px;color:#a1a1aa;-webkit-text-stroke:0.1px #a1a1aa;letter-spacing:0.127px;">Matched Shipments: 8</span><span class="t" style="left:14.7px;top:66px;font-size:12px;line-height:12px;color:#fafafa;-webkit-text-stroke:0.45px #fafafa;letter-spacing:0.020px;">MEDIUM FIT</span><svg class="a" style="left:90.5px;top:65.4px;" width="12.8" height="12.8" viewBox="0 0 24 24" fill="none" stroke="#d4d4d8" stroke-width="2" stroke-linecap="round" stroke-linejoin="round"><path d="M14 18V6a2 2 0 0 0-2-2H4a2 2 0 0 0-2 2v11a1 1 0 0 0 1 1h2"/><path d="M15 18H9"/><path d="M19 18h2a1 1 0 0 0 1-1v-3.650a1 1 0 0 0-.220-.624l-3.480-4.350A1 1 0 0 0 17.520 8H14"/><circle cx="17" cy="18" r="2"/><circle cx="7" cy="18" r="2"/></svg><svg class="a" style="left:12.6px;top:87.5px;" width="16.6" height="16.6" viewBox="0 0 24 24" fill="none" stroke="#5c5c66" stroke-width="1.7" stroke-linecap="round" stroke-linejoin="round"><rect width="18" height="18" x="3" y="3" rx="2"/><path d="M17 12h-2l-2 5-2-10-2 5H7"/></svg><svg class="a" style="left:42.6px;top:87.5px;" width="16.6" height="16.6" viewBox="0 0 24 24" fill="none" stroke="#a1a1aa" stroke-width="1.7" stroke-linecap="round" stroke-linejoin="round"><path d="M18 21a6 6 0 0 0-12 0"/><circle cx="12" cy="11" r="4"/><rect width="18" height="18" x="3" y="3" rx="2"/></svg><span class="t" style="left:71.8px;top:92px;font-size:10.4px;line-height:10.4px;color:#f4f4f5;-webkit-text-stroke:0.25px #f4f4f5;letter-spacing:-0.316px;">HQ: MANCHESTER, GA</span><span class="t" style="left:195px;top:92px;font-size:10.4px;line-height:10.4px;color:#f4f4f5;-webkit-text-stroke:0.25px #f4f4f5;letter-spacing:-0.151px;">Status:</span><span class="t" style="left:229.4px;top:92px;font-size:10.4px;line-height:10.4px;color:#5fa9ee;-webkit-text-stroke:0.1px #5fa9ee;letter-spacing:0.143px;">In Network</span><svg class="a" style="left:293.8px;top:91.8px" width="14.2" height="9.4" viewBox="0 0 14.2 9.4" fill="#fbc91a"><path d="M3.700 0H6.600L6.300 3.200H7.900L7.600 0H10.500L14.200 9.400H8.800L8.400 6H5.800L5.400 9.400H0z"/></svg><span class="t" style="left:307.2px;top:92px;font-size:10.4px;line-height:10.4px;color:#e4e4e7;-webkit-text-stroke:0.2px #e4e4e7;">:</span><a class="t" style="left:313px;top:92px;font-size:10.4px;line-height:10.4px;color:#ecc60c;-webkit-text-stroke:0.35px #ecc60c;letter-spacing:-0.054px;">Partial Pass</a><svg class="a" style="left:370.4px;top:91.5px;" width="10" height="10" viewBox="0 0 24 24" fill="none" stroke="#ecc60c" stroke-width="2.2" stroke-linecap="round" stroke-linejoin="round"><path d="M15 3h6v6"/><path d="M10 14 21 3"/><path d="M18 13v6a2 2 0 0 1-2 2H5a2 2 0 0 1-2-2V8a2 2 0 0 1 2-2h6"/></svg><button class="b" style="left:862px;top:8px;width:100px;height:20px;background:#27272a;border:1px solid #1b9bcb;border-radius:10.0px;"><span class="t" style="left:24px;top:2px;font-size:13.6px;line-height:13.6px;color:#64b5f6;-webkit-text-stroke:0.15px #64b5f6;letter-spacing:0.303px;">Action</span><svg class="a" style="left:65px;top:4.6px;" width="9" height="9" viewBox="0 0 24 24" fill="none" stroke="#64b5f6" stroke-width="2.8" stroke-linecap="round" stroke-linejoin="round"><path d="m6 9 6 6 6-6"/></svg></button>
<button class="b" style="left:862px;top:63px;width:100px;height:20px;background:#27272a;border:1px solid #1b9bcb;border-radius:10.0px;"><span class="t" style="left:38px;top:2px;font-size:13.6px;line-height:13.6px;color:#64b5f6;-webkit-text-stroke:0.15px #64b5f6;letter-spacing:-0.107px;">AI Call</span><svg class="a" style="left:20.2px;top:2.8px;" width="12.8" height="12.8" viewBox="0 0 24 24" fill="none" stroke="#64b5f6" stroke-width="2.2" stroke-linecap="round" stroke-linejoin="round"><path d="m21.640 3.640-1.280-1.280a1.210 1.210 0 0 0-1.720 0L2.360 18.640a1.210 1.210 0 0 0 0 1.720l1.280 1.280a1.200 1.200 0 0 0 1.720 0L21.640 5.360a1.200 1.200 0 0 0 0-1.720"/><path d="m14 7 3 3"/><path d="M5 6v4"/><path d="M19 14v4"/><path d="M10 2v2"/><path d="M7 8H3"/><path d="M21 16h-4"/><path d="M11 3H9"/></svg></button>
<button class="b" style="left:862px;top:88px;width:100px;height:20px;background:#64b5f6;border:1px solid #1b9bcb;border-radius:10.0px;"><span class="t" style="left:15.1px;top:2px;font-size:13.6px;line-height:13.6px;color:#ffffff;-webkit-text-stroke:0.5px #ffffff;letter-spacing:0.220px;">Send Offer</span></button>
</article>
<article style="left:0px;top:479px;width:977px;height:121px;background:#19191c;border:1px solid #27272a;border-radius:12px;"><span class="t" style="left:14.2px;top:12px;font-size:12.8px;line-height:12.8px;color:#a9a9b2;-webkit-text-stroke:0.15px #a9a9b2;">3</span><a class="t" style="left:24.7px;top:12px;font-size:12.8px;line-height:12.8px;color:#5fa9ee;-webkit-text-stroke:0.12px #5fa9ee;letter-spacing:-0.149px;">Four Ways Cargo Inc.</a><span class="t" style="left:13.9px;top:31px;font-size:9.6px;line-height:9.6px;color:#a1a1aa;-webkit-text-stroke:0.1px #a1a1aa;letter-spacing:0.201px;">MC: 996983 | DOT: 2945627</span><span class="t" style="left:13.9px;top:47px;font-size:9.6px;line-height:9.6px;color:#a1a1aa;-webkit-text-stroke:0.1px #a1a1aa;letter-spacing:0.127px;">Matched Shipments: 8</span><span class="t" style="left:14.7px;top:66px;font-size:12px;line-height:12px;color:#fafafa;-webkit-text-stroke:0.45px #fafafa;letter-spacing:-0.025px;">LOW FIT</span><svg class="a" style="left:68.8px;top:65.4px;" width="12.8" height="12.8" viewBox="0 0 24 24" fill="none" stroke="#fafafa" stroke-width="2" stroke-linecap="round" stroke-linejoin="round"><path d="M20 13c0 5-3.500 7.500-7.660 8.950a1 1 0 0 1-.670-.010C7.500 20.500 4 18 4 13V6a1 1 0 0 1 1-1c2 0 4.500-1.200 6.240-2.720a1.170 1.170 0 0 1 1.520 0C14.510 3.810 17 5 19 5a1 1 0 0 1 1 1z"/><path d="m9 12 2 2 4-4"/></svg><svg class="a" style="left:12.6px;top:87.5px;" width="16.6" height="16.6" viewBox="0 0 24 24" fill="none" stroke="#5c5c66" stroke-width="1.7" stroke-linecap="round" stroke-linejoin="round"><rect width="18" height="18" x="3" y="3" rx="2"/><path d="M17 12h-2l-2 5-2-10-2 5H7"/></svg><svg class="a" style="left:42.6px;top:87.5px;" width="16.6" height="16.6" viewBox="0 0 24 24" fill="none" stroke="#a1a1aa" stroke-width="1.7" stroke-linecap="round" stroke-linejoin="round"><path d="M18 21a6 6 0 0 0-12 0"/><circle cx="12" cy="11" r="4"/><rect width="18" height="18" x="3" y="3" rx="2"/></svg><span class="t" style="left:71.8px;top:92px;font-size:10.4px;line-height:10.4px;color:#f4f4f5;-webkit-text-stroke:0.25px #f4f4f5;letter-spacing:-0.082px;">HQ: LEMONT, IL</span><span class="t" style="left:162.6px;top:92px;font-size:10.4px;line-height:10.4px;color:#f4f4f5;-webkit-text-stroke:0.25px #f4f4f5;letter-spacing:-0.151px;">Status:</span><span class="t" style="left:197px;top:92px;font-size:10.4px;line-height:10.4px;color:#5fa9ee;-webkit-text-stroke:0.1px #5fa9ee;letter-spacing:0.143px;">In Network</span><svg class="a" style="left:261.4px;top:91.8px" width="14.2" height="9.4" viewBox="0 0 14.2 9.4" fill="#fbc91a"><path d="M3.700 0H6.600L6.300 3.200H7.900L7.600 0H10.500L14.200 9.400H8.800L8.400 6H5.800L5.400 9.400H0z"/></svg><span class="t" style="left:274.8px;top:92px;font-size:10.4px;line-height:10.4px;color:#e4e4e7;-webkit-text-stroke:0.2px #e4e4e7;">:</span><a class="t" style="left:280.6px;top:92px;font-size:10.4px;line-height:10.4px;color:#ecc60c;-webkit-text-stroke:0.35px #ecc60c;letter-spacing:-0.054px;">Partial Pass</a><svg class="a" style="left:338px;top:91.5px;" width="10" height="10" viewBox="0 0 24 24" fill="none" stroke="#ecc60c" stroke-width="2.2" stroke-linecap="round" stroke-linejoin="round"><path d="M15 3h6v6"/><path d="M10 14 21 3"/><path d="M18 13v6a2 2 0 0 1-2 2H5a2 2 0 0 1-2-2V8a2 2 0 0 1 2-2h6"/></svg><button class="b" style="left:862px;top:8px;width:100px;height:20px;background:#27272a;border:1px solid #1b9bcb;border-radius:10.0px;"><span class="t" style="left:24px;top:2px;font-size:13.6px;line-height:13.6px;color:#64b5f6;-webkit-text-stroke:0.15px #64b5f6;letter-spacing:0.303px;">Action</span><svg class="a" style="left:65px;top:4.6px;" width="9" height="9" viewBox="0 0 24 24" fill="none" stroke="#64b5f6" stroke-width="2.8" stroke-linecap="round" stroke-linejoin="round"><path d="m6 9 6 6 6-6"/></svg></button>
<button class="b" style="left:862px;top:63px;width:100px;height:20px;background:#27272a;border:1px solid #1b9bcb;border-radius:10.0px;"><span class="t" style="left:38px;top:2px;font-size:13.6px;line-height:13.6px;color:#64b5f6;-webkit-text-stroke:0.15px #64b5f6;letter-spacing:-0.107px;">AI Call</span><svg class="a" style="left:20.2px;top:2.8px;" width="12.8" height="12.8" viewBox="0 0 24 24" fill="none" stroke="#64b5f6" stroke-width="2.2" stroke-linecap="round" stroke-linejoin="round"><path d="m21.640 3.640-1.280-1.280a1.210 1.210 0 0 0-1.720 0L2.360 18.640a1.210 1.210 0 0 0 0 1.720l1.280 1.280a1.200 1.200 0 0 0 1.720 0L21.640 5.360a1.200 1.200 0 0 0 0-1.720"/><path d="m14 7 3 3"/><path d="M5 6v4"/><path d="M19 14v4"/><path d="M10 2v2"/><path d="M7 8H3"/><path d="M21 16h-4"/><path d="M11 3H9"/></svg></button>
<button class="b" style="left:862px;top:88px;width:100px;height:20px;background:#64b5f6;border:1px solid #1b9bcb;border-radius:10.0px;"><span class="t" style="left:15.1px;top:2px;font-size:13.6px;line-height:13.6px;color:#ffffff;-webkit-text-stroke:0.5px #ffffff;letter-spacing:0.220px;">Send Offer</span></button>
</article>
<article style="left:0px;top:614px;width:977px;height:121px;background:#19191c;border:1px solid #27272a;border-radius:12px;"><span class="t" style="left:14.2px;top:12px;font-size:12.8px;line-height:12.8px;color:#a9a9b2;-webkit-text-stroke:0.15px #a9a9b2;">4</span><a class="t" style="left:24.7px;top:12px;font-size:12.8px;line-height:12.8px;color:#5fa9ee;-webkit-text-stroke:0.12px #5fa9ee;letter-spacing:-0.118px;">Zv Group Inc.</a><span class="t" style="left:13.9px;top:31px;font-size:9.6px;line-height:9.6px;color:#a1a1aa;-webkit-text-stroke:0.1px #a1a1aa;letter-spacing:0.101px;">MC: 900588 | DOT: 2575122</span><span class="t" style="left:13.9px;top:46px;font-size:9.6px;line-height:9.6px;color:#a1a1aa;-webkit-text-stroke:0.1px #a1a1aa;letter-spacing:0.127px;">Matched Shipments: 9</span><span class="t" style="left:14.7px;top:65px;font-size:12px;line-height:12px;color:#fafafa;-webkit-text-stroke:0.45px #fafafa;letter-spacing:-0.025px;">LOW FIT</span><svg class="a" style="left:68.8px;top:64.4px;" width="12.8" height="12.8" viewBox="0 0 24 24" fill="none" stroke="#fafafa" stroke-width="2" stroke-linecap="round" stroke-linejoin="round"><path d="M20 13c0 5-3.500 7.500-7.660 8.950a1 1 0 0 1-.670-.010C7.500 20.500 4 18 4 13V6a1 1 0 0 1 1-1c2 0 4.500-1.200 6.240-2.720a1.170 1.170 0 0 1 1.520 0C14.510 3.810 17 5 19 5a1 1 0 0 1 1 1z"/><path d="m9 12 2 2 4-4"/></svg><svg class="a" style="left:12.6px;top:87.5px;" width="16.6" height="16.6" viewBox="0 0 24 24" fill="none" stroke="#5c5c66" stroke-width="1.7" stroke-linecap="round" stroke-linejoin="round"><rect width="18" height="18" x="3" y="3" rx="2"/><path d="M17 12h-2l-2 5-2-10-2 5H7"/></svg><svg class="a" style="left:42.6px;top:87.5px;" width="16.6" height="16.6" viewBox="0 0 24 24" fill="none" stroke="#a1a1aa" stroke-width="1.7" stroke-linecap="round" stroke-linejoin="round"><path d="M18 21a6 6 0 0 0-12 0"/><circle cx="12" cy="11" r="4"/><rect width="18" height="18" x="3" y="3" rx="2"/></svg><span class="t" style="left:71.8px;top:92px;font-size:10.4px;line-height:10.4px;color:#f4f4f5;-webkit-text-stroke:0.25px #f4f4f5;letter-spacing:-0.255px;">HQ: SOUTH ELGIN, IL</span><span class="t" style="left:187.2px;top:92px;font-size:10.4px;line-height:10.4px;color:#f4f4f5;-webkit-text-stroke:0.25px #f4f4f5;letter-spacing:-0.151px;">Status:</span><span class="t" style="left:221.6px;top:92px;font-size:10.4px;line-height:10.4px;color:#5fa9ee;-webkit-text-stroke:0.1px #5fa9ee;letter-spacing:0.143px;">In Network</span><svg class="a" style="left:286px;top:91.8px" width="14.2" height="9.4" viewBox="0 0 14.2 9.4" fill="#fbc91a"><path d="M3.700 0H6.600L6.300 3.200H7.900L7.600 0H10.500L14.200 9.400H8.800L8.400 6H5.800L5.400 9.400H0z"/></svg><span class="t" style="left:299.4px;top:92px;font-size:10.4px;line-height:10.4px;color:#e4e4e7;-webkit-text-stroke:0.2px #e4e4e7;">:</span><a class="t" style="left:305.2px;top:92px;font-size:10.4px;line-height:10.4px;color:#ecc60c;-webkit-text-stroke:0.35px #ecc60c;letter-spacing:-0.054px;">Partial Pass</a><svg class="a" style="left:362.6px;top:91.5px;" width="10" height="10" viewBox="0 0 24 24" fill="none" stroke="#ecc60c" stroke-width="2.2" stroke-linecap="round" stroke-linejoin="round"><path d="M15 3h6v6"/><path d="M10 14 21 3"/><path d="M18 13v6a2 2 0 0 1-2 2H5a2 2 0 0 1-2-2V8a2 2 0 0 1 2-2h6"/></svg><button class="b" style="left:862px;top:8px;width:100px;height:20px;background:#27272a;border:1px solid #1b9bcb;border-radius:10.0px;"><span class="t" style="left:24px;top:2px;font-size:13.6px;line-height:13.6px;color:#64b5f6;-webkit-text-stroke:0.15px #64b5f6;letter-spacing:0.303px;">Action</span><svg class="a" style="left:65px;top:4.6px;" width="9" height="9" viewBox="0 0 24 24" fill="none" stroke="#64b5f6" stroke-width="2.8" stroke-linecap="round" stroke-linejoin="round"><path d="m6 9 6 6 6-6"/></svg></button>
<button class="b" style="left:862px;top:62px;width:100px;height:20px;background:#27272a;border:1px solid #1b9bcb;border-radius:10.0px;"><span class="t" style="left:38px;top:2px;font-size:13.6px;line-height:13.6px;color:#64b5f6;-webkit-text-stroke:0.15px #64b5f6;letter-spacing:-0.107px;">AI Call</span><svg class="a" style="left:20.2px;top:2.8px;" width="12.8" height="12.8" viewBox="0 0 24 24" fill="none" stroke="#64b5f6" stroke-width="2.2" stroke-linecap="round" stroke-linejoin="round"><path d="m21.640 3.640-1.280-1.280a1.210 1.210 0 0 0-1.720 0L2.360 18.640a1.210 1.210 0 0 0 0 1.720l1.280 1.280a1.200 1.200 0 0 0 1.720 0L21.640 5.360a1.200 1.200 0 0 0 0-1.720"/><path d="m14 7 3 3"/><path d="M5 6v4"/><path d="M19 14v4"/><path d="M10 2v2"/><path d="M7 8H3"/><path d="M21 16h-4"/><path d="M11 3H9"/></svg></button>
<button class="b" style="left:862px;top:87px;width:100px;height:20px;background:#64b5f6;border:1px solid #1b9bcb;border-radius:10.0px;"><span class="t" style="left:15.1px;top:2px;font-size:13.6px;line-height:13.6px;color:#ffffff;-webkit-text-stroke:0.5px #ffffff;letter-spacing:0.220px;">Send Offer</span></button>
</article>
<article style="left:0px;top:748px;width:977px;height:121px;background:#19191c;border:1px solid #27272a;border-radius:12px;"><span class="t" style="left:14.2px;top:12px;font-size:12.8px;line-height:12.8px;color:#a9a9b2;-webkit-text-stroke:0.15px #a9a9b2;">5</span><a class="t" style="left:24.7px;top:12px;font-size:12.8px;line-height:12.8px;color:#5fa9ee;-webkit-text-stroke:0.12px #5fa9ee;letter-spacing:-0.175px;">Grand Carriers LLC</a><span class="t" style="left:13.9px;top:31px;font-size:9.6px;line-height:9.6px;color:#a1a1aa;-webkit-text-stroke:0.1px #a1a1aa;letter-spacing:0.085px;">MC: 1418848 | DOT: 3873426</span><span class="t" style="left:13.9px;top:47px;font-size:9.6px;line-height:9.6px;color:#a1a1aa;-webkit-text-stroke:0.1px #a1a1aa;letter-spacing:0.127px;">Matched Shipments: 5</span><span class="t" style="left:14.7px;top:66px;font-size:12px;line-height:12px;color:#fafafa;-webkit-text-stroke:0.45px #fafafa;letter-spacing:-0.025px;">LOW FIT</span><svg class="a" style="left:68.8px;top:65.4px;" width="12.8" height="12.8" viewBox="0 0 24 24" fill="none" stroke="#fafafa" stroke-width="2" stroke-linecap="round" stroke-linejoin="round"><path d="M20 13c0 5-3.500 7.500-7.660 8.950a1 1 0 0 1-.670-.010C7.500 20.500 4 18 4 13V6a1 1 0 0 1 1-1c2 0 4.500-1.200 6.240-2.720a1.170 1.170 0 0 1 1.520 0C14.510 3.810 17 5 19 5a1 1 0 0 1 1 1z"/><path d="m9 12 2 2 4-4"/></svg><svg class="a" style="left:12.6px;top:87.5px;" width="16.6" height="16.6" viewBox="0 0 24 24" fill="none" stroke="#5c5c66" stroke-width="1.7" stroke-linecap="round" stroke-linejoin="round"><rect width="18" height="18" x="3" y="3" rx="2"/><path d="M17 12h-2l-2 5-2-10-2 5H7"/></svg><svg class="a" style="left:42.6px;top:87.5px;" width="16.6" height="16.6" viewBox="0 0 24 24" fill="none" stroke="#a1a1aa" stroke-width="1.7" stroke-linecap="round" stroke-linejoin="round"><path d="M18 21a6 6 0 0 0-12 0"/><circle cx="12" cy="11" r="4"/><rect width="18" height="18" x="3" y="3" rx="2"/></svg><span class="t" style="left:71.8px;top:92px;font-size:10.4px;line-height:10.4px;color:#f4f4f5;-webkit-text-stroke:0.25px #f4f4f5;letter-spacing:-0.179px;">HQ: MASON, OH</span><span class="t" style="left:164.3px;top:92px;font-size:10.4px;line-height:10.4px;color:#f4f4f5;-webkit-text-stroke:0.25px #f4f4f5;letter-spacing:-0.151px;">Status:</span><span class="t" style="left:198.7px;top:92px;font-size:10.4px;line-height:10.4px;color:#5fa9ee;-webkit-text-stroke:0.1px #5fa9ee;letter-spacing:0.143px;">In Network</span><svg class="a" style="left:263.1px;top:91.8px" width="14.2" height="9.4" viewBox="0 0 14.2 9.4" fill="#fbc91a"><path d="M3.700 0H6.600L6.300 3.200H7.900L7.600 0H10.500L14.200 9.400H8.800L8.400 6H5.800L5.400 9.400H0z"/></svg><span class="t" style="left:276.5px;top:92px;font-size:10.4px;line-height:10.4px;color:#e4e4e7;-webkit-text-stroke:0.2px #e4e4e7;">:</span><a class="t" style="left:282.3px;top:92px;font-size:10.4px;line-height:10.4px;color:#ecc60c;-webkit-text-stroke:0.35px #ecc60c;letter-spacing:-0.054px;">Partial Pass</a><svg class="a" style="left:339.7px;top:91.5px;" width="10" height="10" viewBox="0 0 24 24" fill="none" stroke="#ecc60c" stroke-width="2.2" stroke-linecap="round" stroke-linejoin="round"><path d="M15 3h6v6"/><path d="M10 14 21 3"/><path d="M18 13v6a2 2 0 0 1-2 2H5a2 2 0 0 1-2-2V8a2 2 0 0 1 2-2h6"/></svg><button class="b" style="left:862px;top:8px;width:100px;height:20px;background:#27272a;border:1px solid #1b9bcb;border-radius:10.0px;"><span class="t" style="left:24px;top:2px;font-size:13.6px;line-height:13.6px;color:#64b5f6;-webkit-text-stroke:0.15px #64b5f6;letter-spacing:0.303px;">Action</span><svg class="a" style="left:65px;top:4.6px;" width="9" height="9" viewBox="0 0 24 24" fill="none" stroke="#64b5f6" stroke-width="2.8" stroke-linecap="round" stroke-linejoin="round"><path d="m6 9 6 6 6-6"/></svg></button>
<button class="b" style="left:862px;top:63px;width:100px;height:20px;background:#27272a;border:1px solid #1b9bcb;border-radius:10.0px;"><span class="t" style="left:38px;top:2px;font-size:13.6px;line-height:13.6px;color:#64b5f6;-webkit-text-stroke:0.15px #64b5f6;letter-spacing:-0.107px;">AI Call</span><svg class="a" style="left:20.2px;top:2.8px;" width="12.8" height="12.8" viewBox="0 0 24 24" fill="none" stroke="#64b5f6" stroke-width="2.2" stroke-linecap="round" stroke-linejoin="round"><path d="m21.640 3.640-1.280-1.280a1.210 1.210 0 0 0-1.720 0L2.360 18.640a1.210 1.210 0 0 0 0 1.720l1.280 1.280a1.200 1.200 0 0 0 1.720 0L21.640 5.360a1.200 1.200 0 0 0 0-1.720"/><path d="m14 7 3 3"/><path d="M5 6v4"/><path d="M19 14v4"/><path d="M10 2v2"/><path d="M7 8H3"/><path d="M21 16h-4"/><path d="M11 3H9"/></svg></button>
<button class="b" style="left:862px;top:88px;width:100px;height:20px;background:#64b5f6;border:1px solid #1b9bcb;border-radius:10.0px;"><span class="t" style="left:15.1px;top:2px;font-size:13.6px;line-height:13.6px;color:#ffffff;-webkit-text-stroke:0.5px #ffffff;letter-spacing:0.220px;">Send Offer</span></button>
</article>
<article style="left:0px;top:883px;width:977px;height:121px;background:#19191c;border:1px solid #27272a;border-radius:12px;"><span class="t" style="left:14.2px;top:12px;font-size:12.8px;line-height:12.8px;color:#a9a9b2;-webkit-text-stroke:0.15px #a9a9b2;">6</span><a class="t" style="left:24.7px;top:12px;font-size:12.8px;line-height:12.8px;color:#5fa9ee;-webkit-text-stroke:0.12px #5fa9ee;letter-spacing:-0.063px;">Rmk Transportation Inc.</a><span class="t" style="left:13.9px;top:30px;font-size:9.6px;line-height:9.6px;color:#a1a1aa;-webkit-text-stroke:0.1px #a1a1aa;letter-spacing:0.085px;">MC: 1005506 | DOT: 2585599</span><span class="t" style="left:13.9px;top:47px;font-size:9.6px;line-height:9.6px;color:#a1a1aa;-webkit-text-stroke:0.1px #a1a1aa;letter-spacing:0.127px;">Matched Shipments: 7</span><span class="t" style="left:14.7px;top:66px;font-size:12px;line-height:12px;color:#fafafa;-webkit-text-stroke:0.45px #fafafa;letter-spacing:-0.025px;">LOW FIT</span><svg class="a" style="left:68.8px;top:65.4px;" width="12.8" height="12.8" viewBox="0 0 24 24" fill="none" stroke="#fafafa" stroke-width="2" stroke-linecap="round" stroke-linejoin="round"><path d="M20 13c0 5-3.500 7.500-7.660 8.950a1 1 0 0 1-.670-.010C7.500 20.500 4 18 4 13V6a1 1 0 0 1 1-1c2 0 4.500-1.200 6.240-2.720a1.170 1.170 0 0 1 1.520 0C14.510 3.810 17 5 19 5a1 1 0 0 1 1 1z"/><path d="m9 12 2 2 4-4"/></svg><svg class="a" style="left:12.6px;top:87.5px;" width="16.6" height="16.6" viewBox="0 0 24 24" fill="none" stroke="#5c5c66" stroke-width="1.7" stroke-linecap="round" stroke-linejoin="round"><rect width="18" height="18" x="3" y="3" rx="2"/><path d="M17 12h-2l-2 5-2-10-2 5H7"/></svg><svg class="a" style="left:42.6px;top:87.5px;" width="16.6" height="16.6" viewBox="0 0 24 24" fill="none" stroke="#a1a1aa" stroke-width="1.7" stroke-linecap="round" stroke-linejoin="round"><path d="M18 21a6 6 0 0 0-12 0"/><circle cx="12" cy="11" r="4"/><rect width="18" height="18" x="3" y="3" rx="2"/></svg><span class="t" style="left:71.8px;top:92px;font-size:10.4px;line-height:10.4px;color:#f4f4f5;-webkit-text-stroke:0.25px #f4f4f5;letter-spacing:-0.286px;">HQ: CHICAGO, IL</span><span class="t" style="left:165.8px;top:92px;font-size:10.4px;line-height:10.4px;color:#f4f4f5;-webkit-text-stroke:0.25px #f4f4f5;letter-spacing:-0.151px;">Status:</span><span class="t" style="left:200.2px;top:92px;font-size:10.4px;line-height:10.4px;color:#5fa9ee;-webkit-text-stroke:0.1px #5fa9ee;letter-spacing:0.143px;">In Network</span><svg class="a" style="left:264.6px;top:91.8px" width="14.2" height="9.4" viewBox="0 0 14.2 9.4" fill="#fbc91a"><path d="M3.700 0H6.600L6.300 3.200H7.900L7.600 0H10.500L14.200 9.400H8.800L8.400 6H5.800L5.400 9.400H0z"/></svg><span class="t" style="left:278px;top:92px;font-size:10.4px;line-height:10.4px;color:#e4e4e7;-webkit-text-stroke:0.2px #e4e4e7;">:</span><a class="t" style="left:283.8px;top:92px;font-size:10.4px;line-height:10.4px;color:#ecc60c;-webkit-text-stroke:0.35px #ecc60c;letter-spacing:-0.054px;">Partial Pass</a><svg class="a" style="left:341.2px;top:91.5px;" width="10" height="10" viewBox="0 0 24 24" fill="none" stroke="#ecc60c" stroke-width="2.2" stroke-linecap="round" stroke-linejoin="round"><path d="M15 3h6v6"/><path d="M10 14 21 3"/><path d="M18 13v6a2 2 0 0 1-2 2H5a2 2 0 0 1-2-2V8a2 2 0 0 1 2-2h6"/></svg><button class="b" style="left:862px;top:8px;width:100px;height:20px;background:#27272a;border:1px solid #1b9bcb;border-radius:10.0px;"><span class="t" style="left:24px;top:2px;font-size:13.6px;line-height:13.6px;color:#64b5f6;-webkit-text-stroke:0.15px #64b5f6;letter-spacing:0.303px;">Action</span><svg class="a" style="left:65px;top:4.6px;" width="9" height="9" viewBox="0 0 24 24" fill="none" stroke="#64b5f6" stroke-width="2.8" stroke-linecap="round" stroke-linejoin="round"><path d="m6 9 6 6 6-6"/></svg></button>
<button class="b" style="left:862px;top:63px;width:100px;height:20px;background:#27272a;border:1px solid #1b9bcb;border-radius:10.0px;"><span class="t" style="left:38px;top:2px;font-size:13.6px;line-height:13.6px;color:#64b5f6;-webkit-text-stroke:0.15px #64b5f6;letter-spacing:-0.107px;">AI Call</span><svg class="a" style="left:20.2px;top:2.8px;" width="12.8" height="12.8" viewBox="0 0 24 24" fill="none" stroke="#64b5f6" stroke-width="2.2" stroke-linecap="round" stroke-linejoin="round"><path d="m21.640 3.640-1.280-1.280a1.210 1.210 0 0 0-1.720 0L2.360 18.640a1.210 1.210 0 0 0 0 1.720l1.280 1.280a1.200 1.200 0 0 0 1.720 0L21.640 5.360a1.200 1.200 0 0 0 0-1.720"/><path d="m14 7 3 3"/><path d="M5 6v4"/><path d="M19 14v4"/><path d="M10 2v2"/><path d="M7 8H3"/><path d="M21 16h-4"/><path d="M11 3H9"/></svg></button>
<button class="b" style="left:862px;top:88px;width:100px;height:20px;background:#64b5f6;border:1px solid #1b9bcb;border-radius:10.0px;"><span class="t" style="left:15.1px;top:2px;font-size:13.6px;line-height:13.6px;color:#ffffff;-webkit-text-stroke:0.5px #ffffff;letter-spacing:0.220px;">Send Offer</span></button>
</article>
</main>
</body>
</html>
